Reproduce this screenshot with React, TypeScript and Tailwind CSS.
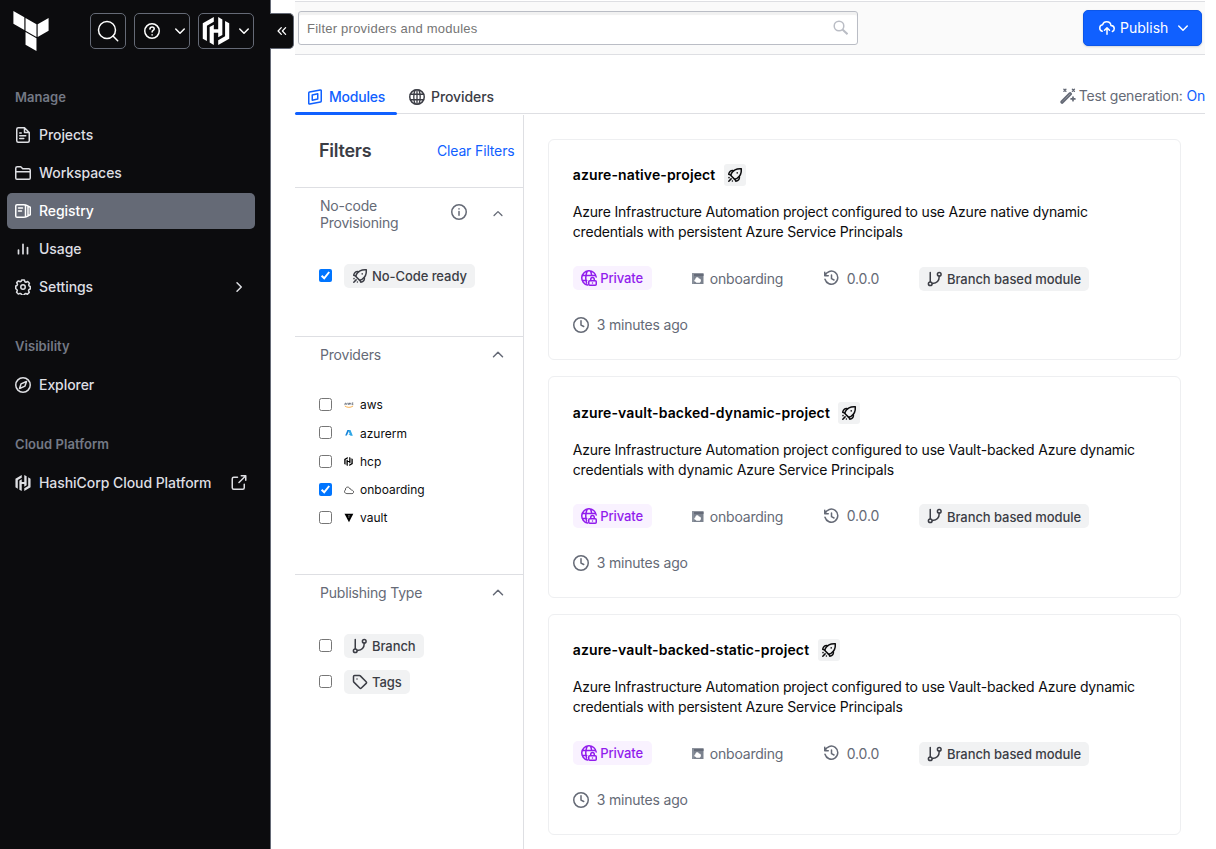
import React from "react";
import { SiHashicorp } from "react-icons/si";

type IconProps = { className?: string; size?: number; children?: React.ReactNode };

function Icon({ className = "", size = 16, children }: IconProps) {
  return (
    <svg
      width={size}
      height={size}
      viewBox="0 0 16 16"
      fill="none"
      stroke="currentColor"
      strokeWidth={1.5}
      strokeLinecap="round"
      strokeLinejoin="round"
      className={"shrink-0 " + className}
    >
      {children}
    </svg>
  );
}

const ChevronDown = (p: IconProps) => (
  <Icon {...p}><path d="M3.75 6 8 10.25 12.25 6" /></Icon>
);
const ChevronUp = (p: IconProps) => (
  <Icon {...p}><path d="M3.5 9.75 8 5.25l4.5 4.5" /></Icon>
);
const ChevronRight = (p: IconProps) => (
  <Icon {...p}><path d="M6 3.75 10.25 8 6 12.25" /></Icon>
);
const FileIcon = () => (
  <Icon>
    <path d="M9.5.75H3.25c-.83 0-1.5.67-1.5 1.5v11.5c0 .83.67 1.5 1.5 1.5h9.5c.83 0 1.5-.67 1.5-1.5V5.5zM9.5.75V5.5h4.75M4.75 6h1.5M4.75 8.75h6M4.75 11.5h4" />
  </Icon>
);
const FolderIcon = () => (
  <Icon>
    <path d="M.75 13V3.25c0-.83.67-1.5 1.5-1.5h3.5l2 2h6c.83 0 1.5.67 1.5 1.5V13c0 .7-.56 1.25-1.25 1.25H2C1.3 14.25.75 13.7.75 13zM.75 6.75h14.5" />
  </Icon>
);
const RegistryIcon = () => (
  <Icon>
    <path d="M2 1.75h7.25c.7 0 1.25.56 1.25 1.25v10c0 .7-.56 1.25-1.25 1.25H2C1.3 14.25.75 13.7.75 13V3C.75 2.3 1.3 1.75 2 1.75zM3.5 5h4M3.5 8h3M10.5 2l2.5.9v10.2l-2.5.9M13 3.3l2.25.9v7.6l-2.25.9" />
  </Icon>
);
const UsageIcon = () => (
  <Icon><path d="M3.5 9v3.75M8 3.25v9.5M12.5 6.5v6.25" strokeWidth={1.7} /></Icon>
);
const GearIcon = () => (
  <Icon>
    <circle cx="8" cy="8" r="2.25" />
    <path d="M6.65.9h2.7l.55 1.8 1.1.5 1.75-.8 1.7 1.75-.75 1.75.45 1.15 1.1.45v2.5l-1.35.6-.4 1.05.75 1.75-1.8 1.8-1.7-.75-1.05.45-.5 1.2H6.65l-.55-1.3-1.1-.45-1.7.75-1.75-1.8.75-1.7-.4-1.05L.75 9.75v-2.7L2 6.5l.5-1.1-.8-1.75L3.45 1.9l1.7.8 1.05-.45z" />
  </Icon>
);
const CompassIcon = () => (
  <Icon>
    <circle cx="8" cy="8" r="7.25" />
    <path d="M11.5 4.5 10 9.1 4.5 11.5 6 6.9z" />
  </Icon>
);
const ExternalIcon = () => (
  <Icon>
    <path d="M10.25.75h4.5v4.5M14.5 1 8 7.5M6.5 2.25H2.75c-.83 0-1.5.67-1.5 1.5v9c0 .83.67 1.5 1.5 1.5h9c.83 0 1.5-.67 1.5-1.5v-3.5" />
  </Icon>
);
const HelpIcon = () => (
  <Icon>
    <circle cx="8" cy="8" r="7.25" />
    <path d="M5.9 6.1C6 4.8 6.9 4.1 8.1 4.1c1.3 0 2.1.8 2.1 1.8 0 1.5-2.1 1.6-2.1 3.1M8.1 11.8v.1" />
  </Icon>
);
const ModuleIcon = () => (
  <Icon>
    <path d="M2.6 3 13.2.9c.6-.1 1.05.3 1.05.9v10.1c0 .5-.3.9-.8 1L2.8 15.1c-.6.1-1.05-.3-1.05-.9V4c0-.5.35-.9.85-1z" />
    <path d="m5.25 6 5.5-1.2v5.1l-5.5 1.3z" />
  </Icon>
);
const GlobeIcon = () => (
  <Icon>
    <circle cx="8" cy="8" r="7.25" />
    <path d="M6.2.9C4.3 4.8 4.3 11 6.2 15.1M9.8.9c1.9 3.9 1.9 10.1 0 14.2M8 .8v14.4M1.4 5.25h13.2M1.4 10.75h13.2" strokeWidth={1.3} />
  </Icon>
);
const RocketIcon = ({ size = 16 }: IconProps) => (
  <Icon size={size}>
    <path d="M14.3 1.7C10 1.4 6.6 2.6 4.6 6.1L3.9 7.7c-.2.4-.1.8.2 1.1l3.1 3.1c.3.3.7.4 1.1.2l1.6-.7c3.5-2 4.7-5.4 4.4-9.7z" />
    <path d="M6.6 3.7C4.2 3 2.3 4.4 1.7 7.2l2.2.9M12.3 9.4c.7 2.4-.7 4.3-3.5 4.9l-.9-2.2M10.2 5.8v.1M4.1 11.9l-2.3 2.3M2 10.6v.1M5.4 14v.1" />
  </Icon>
);
const BranchIcon = () => (
  <Icon>
    <circle cx="3.25" cy="12.75" r="1.85" />
    <circle cx="12.25" cy="3.25" r="1.85" />
    <path d="M3.25 1.5v9.2M12.25 5.25c0 4-2.3 6.9-6.8 7.3" />
  </Icon>
);
const TagIcon = () => (
  <Icon>
    <path d="M1.5 2.6v4.7c0 .3.1.6.35.85l5.9 5.9c.45.45 1.15.45 1.6 0l4.8-4.7c.45-.45.45-1.15 0-1.6L8.3 1.85c-.2-.2-.5-.35-.85-.35H2.6c-.6 0-1.1.5-1.1 1.1zM5 5v.1" />
  </Icon>
);
const InfoIcon = () => (
  <Icon>
    <circle cx="8" cy="8" r="7.25" />
    <path d="M8 7.5v3.75M8 4.8v.1" />
  </Icon>
);
const PrivateIcon = () => (
  <Icon>
    <path d="M6.5 15.1A7.25 7.25 0 1 1 15.2 7M6.3 1C4.6 4.6 4.3 9 5.6 13M9.5 1c.5 1.2.8 2.3 1 3.5M1.2 5.4h13.4M1.2 10.6h4.5" />
    <path d="M8.75 10.75h5.5c.55 0 1 .45 1 1v2.5c0 .55-.45 1-1 1h-5.5c-.55 0-1-.45-1-1v-2.5c0-.55.45-1 1-1zM9.75 10.5V9.3a1.75 1.75 0 0 1 3.5 0v1.2M11.5 13v.1" />
  </Icon>
);
const HistoryIcon = () => (
  <Icon>
    <path d="M.75 2.25v3.5h3.5M1.1 5.6a6.5 6.5 0 1 1-.1 3.7M7.5 5v3.7l2.5 1.3" />
  </Icon>
);
const ClockIcon = () => (
  <Icon>
    <circle cx="8" cy="8" r="7.25" />
    <path d="M8 3.75V8.1l2.75 1.4" />
  </Icon>
);
const UploadCloudIcon = () => (
  <Icon>
    <path d="M3.2 11.3C1.7 10.8.75 9.6.75 8c0-1.7 1.2-3 2.8-3.3C4.2 2.9 5.7 1.75 7.6 1.75c2.3 0 4.1 1.6 4.4 3.8 1.8.1 3.25 1.4 3.25 3.1 0 1.2-.8 2.3-1.9 2.8M8 14.25v-6M5.5 10.25 8 7.75l2.5 2.5" />
  </Icon>
);
const WandIcon = () => (
  <Icon>
    <path d="m1.4 13.4 8.2-8.2c.8-.8 2.1.5 1.3 1.3l-8.2 8.2c-.8.8-2.1-.5-1.3-1.3z" strokeWidth={1.7} />
    <path d="M13 9v3.75M11.1 10.9h3.8" strokeWidth={1.7} />
    <path d="m3.9 1.3 2 2M5.9 1.3l-2 2M12.4 1.3l2 2M14.4 1.3l-2 2" strokeWidth={1.4} />
  </Icon>
);

function NavItem({ icon, label, active, trailing }: { icon: React.ReactNode; label: string; active?: boolean; trailing?: React.ReactNode }) {
  return (
    <a className={"flex h-9 items-center rounded-[5px] px-2 text-sm font-medium tracking-[-0.06px] " + (active ? "bg-[#656a76] text-white" : "text-[#dedfe3]")}>
      {icon}
      <span className="ml-2 grow whitespace-nowrap">{label}</span>
      {trailing}
    </a>
  );
}

function NavHeading({ children }: { children: React.ReactNode }) {
  return <h3 className="h-5 pl-2 text-[13px] leading-5 font-semibold tracking-[0.05px] text-[#747985]">{children}</h3>;
}

function Sidebar() {
  return (
    <aside className="relative flex h-full w-[271px] shrink-0 flex-col border-r border-[#656a76] bg-[#0c0c0e]">
      <div className="flex h-[49px] items-start pt-[11px] pl-[10.5px]">
        <svg width="40" height="40" viewBox="0 0 24 24" fill="#fff" className="mr-px shrink-0">
          <path d="M1.44 0v7.575l6.561 3.79V3.787zm21.12 4.227l-6.561 3.791v7.574l6.56-3.787zM8.72 4.23v7.575l6.561 3.787V8.018zm0 8.405v7.575L15.28 24v-7.578z" />
        </svg>
        <div className="mt-[2px] ml-[38.5px] flex gap-2 text-white">
          <button className="flex h-9 w-9 items-center justify-center rounded-[5px] border border-[#656a76]">
            <svg width="22" height="22" viewBox="0 0 22 22" fill="none" stroke="currentColor" strokeWidth="1.5" strokeLinecap="round">
              <circle cx="10" cy="10" r="8.5" />
              <path d="m16 16 4.7 4.7" />
            </svg>
          </button>
          <button className="flex h-9 w-14 items-center justify-between rounded-[5px] border border-[#656a76] pr-px pl-[9px]">
            <HelpIcon />
            <ChevronDown />
          </button>
          <button className="flex h-9 w-14 items-center justify-between rounded-[5px] border border-[#656a76] pr-px pl-[3px]">
            <SiHashicorp size={28} />
            <ChevronDown />
          </button>
        </div>
      </div>
      <nav className="flex flex-col pr-[15px] pl-[7px]">
        <div className="mt-[38px] mb-[10px]"><NavHeading>Manage</NavHeading></div>
        <div className="flex flex-col gap-[2px]">
          <NavItem icon={<FileIcon />} label="Projects" />
          <NavItem icon={<FolderIcon />} label="Workspaces" />
          <NavItem icon={<RegistryIcon />} label="Registry" active />
          <NavItem icon={<UsageIcon />} label="Usage" />
          <NavItem icon={<GearIcon />} label="Settings" trailing={<ChevronRight />} />
        </div>
        <div className="mt-[31px] mb-[11px]"><NavHeading>Visibility</NavHeading></div>
        <NavItem icon={<CompassIcon />} label="Explorer" />
        <div className="mt-[31px] mb-[11px]"><NavHeading>Cloud Platform</NavHeading></div>
        <NavItem icon={<SiHashicorp size={16} className="shrink-0" />} label="HashiCorp Cloud Platform" trailing={<ExternalIcon />} />
      </nav>
      <button className="absolute top-[13px] left-[270px] flex h-9 w-6 items-center justify-center rounded-r-[5px] border border-l-0 border-[#656a76] bg-[#0c0c0e] text-white">
        <svg width="10" height="10" viewBox="0 0 10 10" fill="none" stroke="currentColor" strokeWidth="1.3" strokeLinecap="round" strokeLinejoin="round">
          <path d="M4.3 1.6 1.1 5l3.2 3.4M8.6 1.6 5.4 5l3.2 3.4" />
        </svg>
      </button>
    </aside>
  );
}

function Checkbox({ checked }: { checked?: boolean }) {
  return checked ? (
    <span className="flex h-[13px] w-[13px] shrink-0 items-center justify-center rounded-[2px] bg-[#0075ff]">
      <svg width="13" height="13" viewBox="0 0 13 13" fill="none" stroke="#fff" strokeWidth="2">
        <path d="m2.6 6.8 2.6 2.5 5-6.3" />
      </svg>
    </span>
  ) : (
    <span className="h-[13px] w-[13px] shrink-0 rounded-[2.5px] border border-[#767676] bg-white" />
  );
}

function Badge({ icon, label }: { icon: React.ReactNode; label: string }) {
  return (
    <span className="flex h-6 items-center gap-1 rounded-[5px] bg-[#f1f2f3] px-2 text-[13px] font-medium tracking-[-0.07px] whitespace-nowrap text-[#3b3d45]">
      {icon}
      <span className="pt-px">{label}</span>
    </span>
  );
}

const providers = [
  {
    name: "aws",
    logo: (
      <svg width="10" height="10" viewBox="0 0 10 10" fill="none">
        <path d="M.7 4.6c0-2 2-1.6 2 0M.8 4h1.8M3.6 2.8l.8 1.8.8-1.8.7 1.8.8-1.8M9.3 3c-1.8-.5-1.8.6-.8.8 1 .2.6 1.2-.9.8" stroke="#59616e" strokeWidth=".8" />
        <path d="M.8 6c2.4 1.8 5.8 1.8 8.3 0" stroke="#f6a840" strokeWidth=".9" />
      </svg>
    ),
  },
  {
    name: "azurerm",
    logo: (
      <svg width="10" height="10" viewBox="0 0 10 10">
        <path d="M3.4 2h2L2.9 7.6H1.2z" fill="#1683d8" />
        <path d="M5 2h1.5l2.3 5.7H6.7L4.4 6h1.3L4.8 3.7z" fill="#2fa7e6" />
      </svg>
    ),
  },
  { name: "hcp", logo: <SiHashicorp size={9} className="mr-px" /> },
  {
    name: "onboarding",
    checked: true,
    logo: (
      <svg width="10" height="10" viewBox="0 0 10 10" fill="none" stroke="#333" strokeWidth=".8">
        <path d="M2.9 8.6C0 8.4-.1 5.4 1.5 5 .8 1.8 5.2.9 6 4c1 .1 1.2.5 1.4 1.1 2.8.1 3 3.5.5 3.5z" />
      </svg>
    ),
  },
  {
    name: "vault",
    logo: (
      <svg width="10" height="10" viewBox="0 0 10 10">
        <path d="M.5.8h8.8L5 9.3z" fill="#000" />
        <path d="M4 2.8h2.2M4.4 4.2h1.4" stroke="#ddd" strokeWidth=".7" strokeDasharray=".8 .5" />
      </svg>
    ),
  },
];

function FilterHeading({ label }: { label: string }) {
  return (
    <div className="flex h-9 items-center justify-between pr-[17px] pl-[25px]">
      <span className="text-sm tracking-[-0.2px]">{label}</span>
      <ChevronUp size={16} />
    </div>
  );
}

function Filters() {
  return (
    <section className="flex w-[229px] shrink-0 flex-col border-r border-[#dedfe3] text-[#656a76]">
      <div className="flex h-[72px] items-center justify-between pr-[8.5px] pl-6">
        <h2 className="text-lg font-semibold tracking-[-0.25px] text-[#3b3d45]">Filters</h2>
        <a className="text-sm tracking-[-0.15px] text-[#1060ff]">Clear Filters</a>
      </div>
      <div className="h-[149px] border-t border-[#dedfe3]">
        <div className="flex h-[52px] items-center pr-[18px] pl-[25px]">
          <span className="w-[131px] text-sm leading-[17px] tracking-[-0.22px]">No-code Provisioning</span>
          <span className="-mt-[4px]"><InfoIcon /></span>
          <span className="ml-auto pt-px"><ChevronUp size={14} /></span>
        </div>
        <div className="mt-6 flex items-center gap-3 pl-6">
          <Checkbox checked />
          <Badge icon={<RocketIcon />} label="No-Code ready" />
        </div>
      </div>
      <div className="h-[238px] border-t border-[#dedfe3]">
        <FilterHeading label="Providers" />
        <div className="mt-[17.5px] flex flex-col">
          {providers.map((p) => (
            <label key={p.name} className="flex h-[28.25px] items-center pl-6">
              <Checkbox checked={p.checked} />
              <span className="ml-3 pt-px text-black">{p.logo}</span>
              <span className="ml-[6px] pt-[1.8px] text-[12px] text-[#0c0c0e]">{p.name}</span>
            </label>
          ))}
        </div>
      </div>
      <div className="border-t border-[#dedfe3]">
        <FilterHeading label="Publishing Type" />
        <div className="mt-[23px] flex flex-col gap-3 pl-6">
          <div className="flex items-center gap-3"><Checkbox /><Badge icon={<BranchIcon />} label="Branch" /></div>
          <div className="flex items-center gap-3"><Checkbox /><Badge icon={<TagIcon />} label="Tags" /></div>
        </div>
      </div>
    </section>
  );
}

const modules = [
  {
    name: "azure-native-project",
    lines: ["Azure Infrastructure Automation project configured to use Azure native dynamic", "credentials with persistent Azure Service Principals"],
  },
  {
    name: "azure-vault-backed-dynamic-project",
    lines: ["Azure Infrastructure Automation project configured to use Vault-backed Azure dynamic", "credentials with dynamic Azure Service Principals"],
  },
  {
    name: "azure-vault-backed-static-project",
    lines: ["Azure Infrastructure Automation project configured to use Vault-backed Azure dynamic", "credentials with persistent Azure Service Principals"],
  },
];

function ModuleCard({ name, lines }: { name: string; lines: string[] }) {
  return (
    <article className="h-[221.5px] rounded-[6px] border border-[#eeeff1] pt-[24.25px] pr-6 pl-[23.75px] text-sm text-[#656a76]">
      <div className="flex h-[22px] items-center gap-[8.5px] text-[#0c0c0e]">
        <h3 className="font-semibold tracking-[0.13px] text-black">{name}</h3>
        <span className="flex h-[22px] w-[22px] items-center justify-center rounded-[3px] bg-[#f1f2f3]"><RocketIcon size={16} /></span>
      </div>
      <p className="mt-4 leading-5 tracking-[-0.185px] whitespace-nowrap text-[#0c0c0e]">
        {lines[0]}
        <br />
        {lines[1]}
      </p>
      <div className="mt-6 flex h-6 items-center">
        <div className="w-[119px]">
          <span className="flex h-6 w-[79px] items-center gap-[3.5px] rounded-[5px] bg-[#f9f2ff] pl-2 text-[13px] font-medium tracking-[-0.1px] text-[#911ced]"><PrivateIcon /><span className="pt-px">Private</span></span>
        </div>
        <div className="flex w-[132px] items-center pt-[2px]">
          <svg width="12" height="12" viewBox="0 0 12 12">
            <rect x="0" y=".5" width="11.5" height="10.5" fill="#7b828e" />
            <path d="M0 .5h11.5v2.5H0z" fill="#656b78" />
            <path d="M3.4 8.8c-1.6-.2-1.4-2.4 0-2.6 0-2.2 3-2.5 3.5-.6 2.6-.2 2.6 3.6.8 4.1H4.5z" fill="#fff" />
            <path d="M0 .5h2v10.5H0z" fill="#8a919c" />
          </svg>
          <span className="ml-[6px] pt-[0.5px] tracking-[-0.2px]">onboarding</span>
        </div>
        <div className="flex w-[95.25px] items-center">
          <HistoryIcon />
          <span className="ml-[7px] pt-px tracking-[-0.15px]">0.0.0</span>
        </div>
        <div className="pt-[1.5px]"><Badge icon={<BranchIcon />} label="Branch based module" /></div>
      </div>
      <div className="mt-[25px] flex h-5 items-center gap-2"><ClockIcon /><span className="tracking-[-0.2px]">3 minutes ago</span></div>
    </article>
  );
}

export default function App() {
  return (
    <div className="flex h-[849px] w-[1216px] overflow-hidden bg-white font-['Inter',sans-serif]">
      <Sidebar />
      <main className="ml-6 flex w-[910px] flex-col pt-px">
        <header className="flex h-[54px] items-center justify-between border-y border-[#dedfe3] bg-[#fafafa] pr-[3px] pl-[3px]">
          <div className="flex h-[34px] w-[560px] items-center justify-between rounded-[3px] border border-[#babdc5] bg-white pr-[9px] pl-[8px] shadow-[inset_0_3px_1px_#f1f1f1]">
            <span className="pt-[2px] font-['Liberation_Sans',sans-serif] text-[13px] tracking-[0.23px] text-[#757575]">Filter providers and modules</span>
            <svg width="15" height="15" viewBox="0 0 15 15" fill="none" stroke="#babdc5" strokeWidth="1.5"><circle cx="6" cy="6" r="4.8" /><path d="m9.5 9.5 5 4.7" strokeWidth="2" /></svg>
          </div>
          <button className="flex h-9 w-[119px] items-center rounded-[5px] border border-[#0c56e9] bg-[#1060ff] pl-[15px] text-sm text-white shadow-[0_1px_2px_#656a7640]">
            <UploadCloudIcon />
            <span className="ml-[5px] tracking-[0.02px]">Publish</span>
            <span className="ml-[7px]"><ChevronDown /></span>
          </button>
        </header>
        <div className="mt-[25px] flex h-[34px] items-center justify-between border-b border-[#dedfe3] text-sm">
          <div className="flex h-[34px] font-medium">
            <a className="relative flex w-[102px] items-center gap-[6px] pt-px pl-3 tracking-[-0.2px] text-[#1060ff]">
              <ModuleIcon /><span className="pt-px">Modules</span>
              <span className="absolute bottom-[-2px] left-0 h-[3px] w-full rounded-full bg-[#1060ff]" />
            </a>
            <a className="flex items-center gap-[6px] pt-px pl-3 tracking-[-0.08px] text-[#3b3d45]"><GlobeIcon /><span className="pt-px">Providers</span></a>
          </div>
          <div className="flex items-center gap-[3px] text-[#656a76]">
            <WandIcon />
            <span className="tracking-[-0.19px] whitespace-nowrap">Test generation: <a className="text-[#1060ff]">On</a></span>
          </div>
        </div>
        <div className="mt-px flex h-[735px]">
          <Filters />
          <section className="ml-6 flex w-[633px] flex-col gap-4 pt-6">
            {modules.map((m) => <ModuleCard key={m.name} {...m} />)}
          </section>
        </div>
      </main>
    </div>
  );
}
